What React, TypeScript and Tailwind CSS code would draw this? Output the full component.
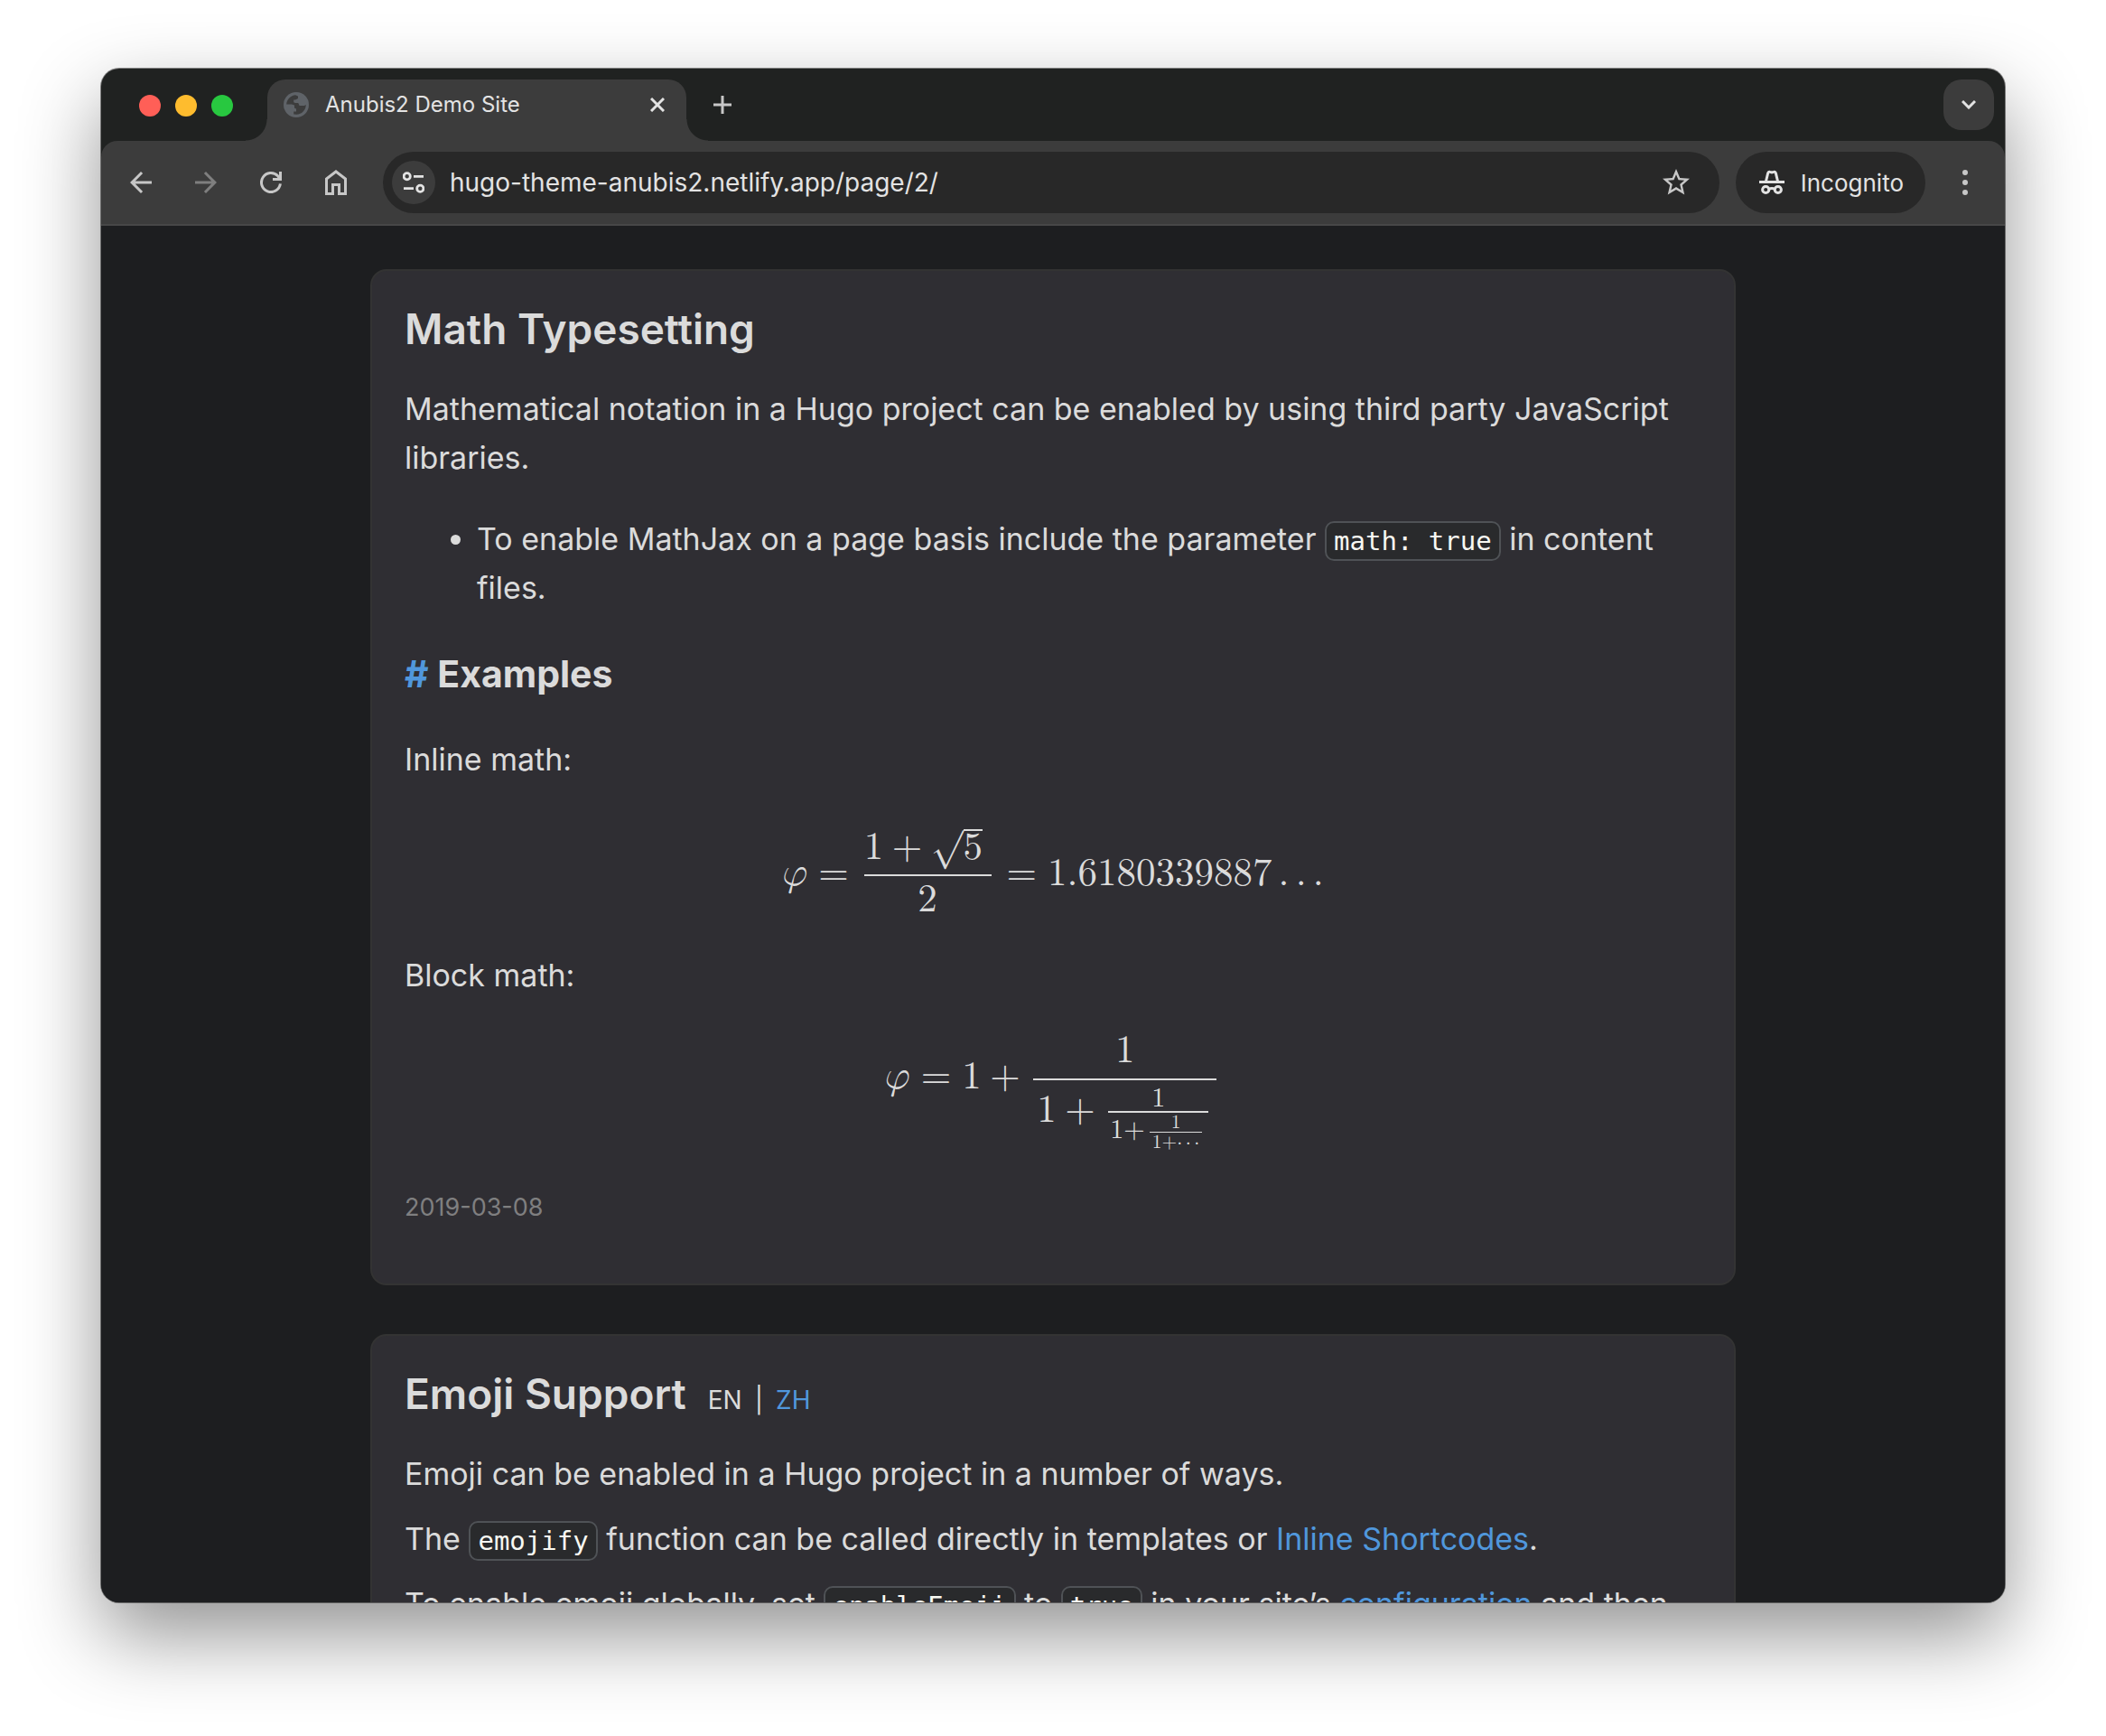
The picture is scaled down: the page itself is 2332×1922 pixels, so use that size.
import type { ReactNode } from "react";

function Code({ children }: { children: ReactNode }) {
  return (
    <code className="rounded-[10px] border-2 border-[#4f5256] bg-[#292a2c] px-2 py-[3px] font-['DejaVu_Sans_Mono',monospace] text-[29px] leading-none text-[#f8f8f2]">
      {children}
    </code>
  );
}

function TextLink({ children }: { children: ReactNode }) {
  return (
    <a href="#" className="text-[#5097dc]">
      {children}
    </a>
  );
}

function GlobeIcon() {
  return (
    <svg viewBox="0 0 28 28" className="size-7 shrink-0" aria-hidden="true">
      <circle cx="14" cy="14" r="14" fill="#5f6368" />
      <path
        d="M3.2 13.5C3.4 8 8 3.4 13.2 3.2L16 4.6V7L13 8.4H11.2V11.2L13 12H16.2L17.6 15H23L24.8 14C24.6 20 20 24.6 14.4 24.8L11.2 24.4V21.6H14V18.4L12 17.4V14.6L9 13.5Z"
        fill="#3c3c3c"
      />
    </svg>
  );
}

function ArrowIcon({ flipped }: { flipped?: boolean }) {
  return (
    <svg viewBox="0 0 24 24" className="size-9" fill="currentColor" aria-hidden="true">
      <path
        d={
          flipped
            ? "M4 11h12.17l-5.59-5.59L12 4l8 8-8 8-1.41-1.41L16.17 13H4v-2z"
            : "M20 11H7.83l5.59-5.59L12 4l-8 8 8 8 1.41-1.41L7.83 13H20v-2z"
        }
      />
    </svg>
  );
}

function ReloadIcon() {
  return (
    <svg viewBox="0 0 24 24" className="size-6" fill="none" stroke="currentColor" strokeWidth="3" aria-hidden="true">
      <path d="M22.4 13.4A10.5 10.5 0 1 1 19.6 4.8L22.5 8.5" />
      <path d="M22.5 0V8.5H14" />
    </svg>
  );
}

function HomeIcon() {
  return (
    <svg viewBox="0 0 24 28" className="h-7 w-6" fill="none" stroke="currentColor" strokeWidth="3" aria-hidden="true">
      <path d="M1.5 26.5V10L12 2L22.5 10V26.5H15.5V16.5H8.5V26.5Z" />
    </svg>
  );
}

function TuneIcon() {
  return (
    <svg viewBox="0 0 24 24" className="size-6" fill="none" stroke="currentColor" strokeWidth="2.8" aria-hidden="true">
      <circle cx="4.7" cy="5.3" r="3.6" />
      <path d="M12 5.3H23M1 18.7H12" />
      <circle cx="19.3" cy="18.7" r="3.6" />
    </svg>
  );
}

function StarIcon() {
  return (
    <svg viewBox="0 0 24 24" className="size-9" fill="currentColor" aria-hidden="true">
      <path d="M22 9.24l-7.19-.62L12 2 9.19 8.63 2 9.24l5.46 4.73L5.82 21 12 17.27 18.18 21l-1.63-7.03L22 9.24zM12 15.4l-3.76 2.27 1-4.28-3.32-2.88 4.38-.38L12 6.1l1.71 4.04 4.38.38-3.32 2.88 1 4.28L12 15.4z" />
    </svg>
  );
}

function IncognitoIcon() {
  return (
    <svg viewBox="0 0 28 28" className="size-7" fill="none" stroke="currentColor" strokeWidth="3" aria-hidden="true">
      <path d="M0 13.4H28" />
      <path d="M7.4 13L9.6 4Q10.2 1.8 12 2.4L14 3L16 2.4Q17.8 1.8 18.4 4L20.6 13" />
      <circle cx="7.2" cy="22" r="3.6" />
      <circle cx="20.8" cy="22" r="3.6" />
      <path d="M10.4 21.6Q14 19.4 17.6 21.6" />
    </svg>
  );
}

function TabStrip() {
  return (
    <div className="flex h-20 shrink-0 items-end">
      <div className="flex h-20 items-center gap-4 pr-[38px] pl-[42px] pt-0.5">
        <button aria-label="Close window" className="size-6 rounded-full bg-[#ff5f57]" />
        <button aria-label="Minimize window" className="size-6 rounded-full bg-[#febc2e]" />
        <button aria-label="Zoom window" className="size-6 rounded-full bg-[#28c840]" />
      </div>
      <div className="relative flex h-[68px] w-[464px] items-center rounded-t-[20px] bg-[#3c3c3c] pb-3 pl-[18px] pr-2">
        <span className="absolute bottom-0 -left-6 size-6 bg-[radial-gradient(circle_at_0_0,transparent_23px,#3c3c3c_24px)]" />
        <span className="absolute bottom-0 -right-6 size-6 bg-[radial-gradient(circle_at_100%_0,transparent_23px,#3c3c3c_24px)]" />
        <GlobeIcon />
        <span className="ml-[18px] flex-1 truncate text-2xl text-[#e3e3e3]">Anubis2 Demo Site</span>
        <button aria-label="Close tab" className="flex size-12 items-center justify-center text-[#e3e3e3]">
          <svg viewBox="0 0 16 16" className="size-4" stroke="currentColor" strokeWidth="3" aria-hidden="true">
            <path d="M1 1L15 15M15 1L1 15" />
          </svg>
        </button>
      </div>
      <button aria-label="New tab" className="mb-3 ml-3 flex size-14 items-center justify-center text-[#c7c7c7]">
        <svg viewBox="0 0 20 20" className="size-5" stroke="currentColor" strokeWidth="3" aria-hidden="true">
          <path d="M10 0V20M0 10H20" />
        </svg>
      </button>
      <button
        aria-label="Search tabs"
        className="mr-3 mb-3 ml-auto flex size-14 items-center justify-center rounded-[20px] bg-[#3c3c3c] text-[#e3e3e3]"
      >
        <svg viewBox="0 0 16 10" className="h-2.5 w-4" fill="none" stroke="currentColor" strokeWidth="3" aria-hidden="true">
          <path d="M1 1L8 8L15 1" />
        </svg>
      </button>
    </div>
  );
}

function Toolbar() {
  return (
    <div className="flex shrink-0 items-center rounded-t-[18px] border-b-2 border-[#474747] bg-[#3c3c3c] py-3 pl-2 text-[#c7c7c7]">
      <button aria-label="Back" className="flex h-[68px] w-[72px] items-center justify-center">
        <ArrowIcon />
      </button>
      <button aria-label="Forward" className="flex h-[68px] w-[72px] items-center justify-center text-[#7f7f7f]">
        <ArrowIcon flipped />
      </button>
      <button aria-label="Reload" className="flex h-[68px] w-[72px] items-center justify-center">
        <ReloadIcon />
      </button>
      <button aria-label="Home" className="flex h-[68px] w-[72px] items-center justify-center">
        <HomeIcon />
      </button>
      <div className="ml-4 flex h-[68px] flex-1 items-center rounded-full bg-[#282828] pl-2.5">
        <button
          aria-label="View site information"
          className="flex size-12 shrink-0 items-center justify-center rounded-full bg-[#3c3c3c] text-[#e3e3e3]"
        >
          <TuneIcon />
        </button>
        <input
          aria-label="Address"
          defaultValue="hugo-theme-anubis2.netlify.app/page/2/"
          className="ml-4 h-10 min-w-0 flex-1 bg-transparent text-[28px] leading-10 text-[#e3e3e3] outline-none"
        />
        <button aria-label="Bookmark this page" className="mr-5 flex size-14 items-center justify-center">
          <StarIcon />
        </button>
      </div>
      <button className="ml-[18px] flex h-[68px] items-center gap-[18px] rounded-full bg-[#282828] pr-6 pl-[26px] text-[26px] text-[#e3e3e3]">
        <IncognitoIcon />
        Incognito
      </button>
      <button aria-label="Menu" className="flex h-[68px] w-[88px] items-center justify-center">
        <svg viewBox="0 0 6 28" className="h-7 w-1.5" fill="currentColor" aria-hidden="true">
          <circle cx="3" cy="3" r="3" />
          <circle cx="3" cy="14" r="3" />
          <circle cx="3" cy="25" r="3" />
        </svg>
      </button>
    </div>
  );
}

function GoldenRatio() {
  return (
    <math display="block" className="text-[43px]">
      <mi>φ</mi>
      <mo>=</mo>
      <mfrac linethickness="2px" className="mx-[5px]">
        <mrow>
          <mn>1</mn>
          <mo>+</mo>
          <msqrt>
            <mn>5</mn>
          </msqrt>
        </mrow>
        <mn>2</mn>
      </mfrac>
      <mo>=</mo>
      <mn>1.6180339887</mn>
      <mo lspace="0.167em" rspace="0.167em">.</mo>
      <mo lspace="0" rspace="0.167em">.</mo>
      <mo lspace="0" rspace="0">.</mo>
    </math>
  );
}

function ContinuedFraction() {
  return (
    <math display="block" className="text-[43px]">
      <mi>φ</mi>
      <mo>=</mo>
      <mn>1</mn>
      <mo>+</mo>
      <mfrac linethickness="2px" className="mx-[5px]">
        <mn>1</mn>
        <mrow className="px-1 pt-1">
          <mn>1</mn>
          <mo>+</mo>
          <mfrac linethickness="2px" className="mx-[5px]">
            <mn>1</mn>
            <mrow className="px-0.5">
              <mn>1</mn>
              <mo lspace="0" rspace="0">+</mo>
              <mfrac className="mx-[5px]">
                <mn>1</mn>
                <mrow className="px-[3px]">
                  <mn>1</mn>
                  <mo lspace="0" rspace="0">+</mo>
                  <mo lspace="0" rspace="0.167em">⋅</mo>
                  <mo lspace="0" rspace="0.167em">⋅</mo>
                  <mo lspace="0" rspace="0">⋅</mo>
                </mrow>
              </mfrac>
            </mrow>
          </mfrac>
        </mrow>
      </mfrac>
    </math>
  );
}

function Card({ children }: { children: ReactNode }) {
  return (
    <article className="rounded-[18px] border-2 border-[#333333] bg-[#2f2e33] px-9 pt-[34px] pb-16">
      {children}
    </article>
  );
}

export default function App() {
  return (
    <div className="flex h-screen flex-col overflow-hidden bg-white px-28 pt-[76px] pb-[148px] font-['Inter',sans-serif]">
      <div className="flex min-h-0 flex-1 flex-col overflow-hidden rounded-[20px] bg-[#202221] shadow-[0_0_0_1px_rgba(0,0,0,0.45),0_36px_88px_rgba(0,0,0,0.43)]">
        <TabStrip />
        <Toolbar />
        <main className="min-h-0 flex-1 overflow-hidden bg-[#1d1e20] px-6 pt-12 text-[34px] leading-[54px] text-[#dbdbdb]">
          <div className="mx-auto flex max-w-[1512px] flex-col gap-[54px]">
            <Card>
              <h2 className="text-[46px] leading-[60px] font-semibold">Math Typesetting</h2>
              <p className="mt-8">
                Mathematical notation in a Hugo project can be enabled by using third party JavaScript libraries.
              </p>
              <ul className="mt-9 list-disc pl-20">
                <li>
                  To enable MathJax on a page basis include the parameter <Code>math: true</Code> in content files.
                </li>
              </ul>
              <h3 className="my-[38px] text-[41px] leading-[60px] font-bold">
                <TextLink>#</TextLink> Examples
              </h3>
              <p>Inline math:</p>
              <div className="mt-12 mb-11">
                <GoldenRatio />
              </div>
              <p>Block math:</p>
              <div className="mt-10 mb-11">
                <ContinuedFraction />
              </div>
              <time dateTime="2019-03-08" className="block text-[27px] leading-10 text-[#7f7f80]">
                2019-03-08
              </time>
            </Card>
            <Card>
              <div className="flex items-baseline gap-6">
                <h2 className="text-[46px] leading-[60px] font-semibold">Emoji Support</h2>
                <div className="flex gap-3.5 text-[28px] leading-10">
                  <span>EN</span>
                  <span>|</span>
                  <TextLink>ZH</TextLink>
                </div>
              </div>
              <div className="mt-8 flex flex-col gap-[18px]">
                <p>Emoji can be enabled in a Hugo project in a number of ways.</p>
                <p>
                  The <Code>emojify</Code> function can be called directly in templates or{" "}
                  <TextLink>Inline Shortcodes</TextLink>.
                </p>
                <p>
                  To enable emoji globally, set <Code>enableEmoji</Code> to <Code>true</Code> in your site’s{" "}
                  <TextLink>configuration</TextLink> and then
                </p>
              </div>
            </Card>
          </div>
        </main>
      </div>
    </div>
  );
}
